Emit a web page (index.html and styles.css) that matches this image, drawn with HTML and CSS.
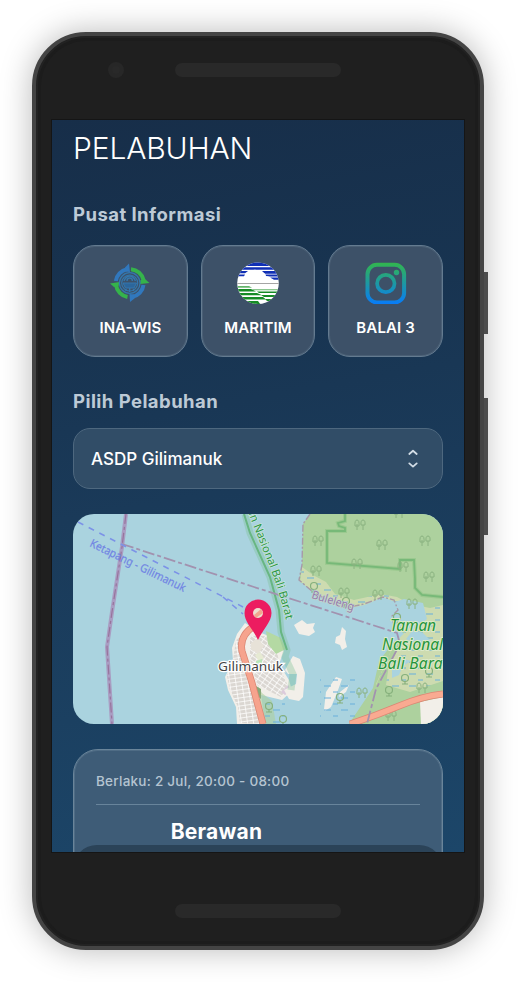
FILE: index.html
```html
<!DOCTYPE html>
<html lang="id">
<head>
<meta charset="utf-8">
<title>Pelabuhan</title>
<link rel="stylesheet" href="styles.css">
</head>
<body>
<div class="phone">
  <span class="side-key power"></span>
  <span class="side-key volume"></span>
  <div class="top-bezel"><span class="camera"></span><span class="speaker"></span></div>
  <main class="screen">
    <h1>PELABUHAN</h1>
    <h2 class="info-title">Pusat Informasi</h2>
    <div class="links">
      <a class="link-card">
        <svg width="42" height="42" viewBox="109 262 42 42" fill="none">
          <g stroke-width="4">
            <path d="M115.8 281A14 14 0 0 1 127 269.2" stroke="#3178bd"/>
            <path d="M131 269.2A14 14 0 0 1 143.5 280" stroke="#35b34b"/>
            <path d="M143.5 285A14 14 0 0 1 132 297" stroke="#3178bd"/>
            <path d="M127.500 297A14 14 0 0 1 116 285" stroke="#35b34b"/>
          </g>
          <path d="M125 267.500L129 263.500L130 272L126 271.500ZM134.500 298.500L130 302L129.500 294L134 294.500Z" fill="#3178bd"/>
          <path d="M145 279L149.500 283L140 284L140.500 280ZM114 287L110 283.500L119.500 282L118.500 286Z" fill="#35b34b"/>
          <g stroke="#3477ad">
            <circle cx="129.700" cy="283" r="10.300" stroke-width="1.2"/>
            <circle cx="129.700" cy="283" r="8" stroke-width="1.2"/>
            <path d="M123 283h13.500l-2.500 5h-8.500z" fill="#2c669b" stroke-width="1"/>
            <path d="M124 281q2-5 5.700-5t5.700 5M127 281q0-3 2.700-3t2.700 3M126 289v2M129.700 288v4M133.500 289v2" stroke-width="1.400"/>
          </g>
        </svg>
        <span class="tight">INA-WIS</span>
      </a>
      <a class="link-card">
        <svg width="42" height="42" viewBox="237 262 42 42">
          <clipPath id="globe"><circle cx="258" cy="283.200" r="20.800"/></clipPath>
          <g clip-path="url(#globe)">
            <path d="M237 262h42v43h-42z" fill="#fff"/>
            <path d="M237 262h42v4h-42zM237 267.200h42v2.600h-42zM237 271h11l-3 2.200h-8zM262 271h17v2.800h-14zM237 274.500h8l-1 1.800h-7zM260 274.600h19v2h-15zM270 277.500h9v2.200h-5z" fill="#102fb5"/>
            <path d="M246 277q0-4 4-4q2-4 6.500-3q4-.5 5.500 3q4 0 4 3q4 0 5 3h-25z" fill="#fff"/>
            <path d="M237 283h42v1h-42z" fill="#a5a5a5"/>
            <path d="M237 286h12l3 1.800h-15zM252 289.200h27v1h-26z" fill="#65b56c"/>
            <path d="M237 289h14l5 2.500h-19zM257 291.500h22v1.500h-20zM237 293h20l5 2.200h-25zM261 295h18v2h-15zM237 297h26l3 2.500h-29zM265 299h14v2h-12zM237 301h21l3 4h-24z" fill="#168b25"/>
          </g>
        </svg>
        <span>MARITIM</span>
      </a>
      <a class="link-card">
        <svg width="42" height="42" viewBox="364.500 262.500 42 42" fill="none">
          <defs><linearGradient id="ig" gradientUnits="userSpaceOnUse" x1="0" y1="263" x2="0" y2="304"><stop offset="0" stop-color="#32b64d"/><stop offset="1" stop-color="#087cf6"/></linearGradient></defs>
          <rect x="367" y="265.300" width="36.600" height="37.600" rx="9.500" stroke="url(#ig)" stroke-width="4"/>
          <circle cx="385.300" cy="284" r="8.700" stroke="url(#ig)" stroke-width="3.700"/>
          <circle cx="396" cy="273" r="2.700" fill="url(#ig)"/>
        </svg>
        <span>BALAI 3</span>
      </a>
    </div>
    <h2 class="port-title">Pilih Pelabuhan</h2>
    <div class="select">
      <span>ASDP Gilimanuk</span>
      <svg width="12" height="20" viewBox="0 0 12 20" fill="none" stroke="#d3dde6" stroke-width="1.800" stroke-linecap="round" stroke-linejoin="round"><path d="M2.300 5L6 1.800L9.700 5M2.300 14.400L6 17.600L9.700 14.400"/></svg>
    </div>
    <svg class="map" width="370" height="210" viewBox="73 514 370 210" fill="none">
      <defs>
        <pattern id="streets" width="6" height="4" patternUnits="userSpaceOnUse" patternTransform="rotate(-8)"><path d="M0 0h6v4H0z" fill="#dbd7d2"/><path d="M0 0h6M0 0v4" stroke="#fff" stroke-width="1.500"/></pattern>
        <pattern id="streets2" width="6" height="4" patternUnits="userSpaceOnUse" patternTransform="rotate(35)"><path d="M0 0h6v4H0z" fill="#dbd7d2"/><path d="M0 0h6M0 0v4" stroke="#fff" stroke-width="1.500"/></pattern>
        <pattern id="marsh" width="17" height="12" patternUnits="userSpaceOnUse"><path d="M1 2h7M10 8h5" stroke="#67b0dc" stroke-width="1.200"/></pattern>
        <g id="trees" stroke="#8ab280" stroke-width="1"><path d="M-3 5V-1M3 5V0M-5 1Q-5.500-5-3-5T-1 1ZM1 0Q.5-5 3-5T5 0Z"/></g>
        <g id="mangrove" stroke="#86b07c" stroke-width="1.200"><circle r="3.500"/><path d="M0 3v3M-3 6h6"/></g>
        <path id="park-label" d="M232 466L249 515Q261 545 270 568T286 620"/>
      </defs>
      <path d="M73 514h370v210H73z" fill="#aad3df"/>
      <path d="M310 514L303 524L302 565L299 580L313 592L333 603L350 607L364 604L383 597L394 600L398 610L391 617L395 627L410 638L393 643L379 661L373 688L349 724H443V514Z" fill="#add19e"/>
      <path d="M302 567L313 575L326 582L335 594L354 600L381 594L397 597L410 604L430 608L443 605V692L428 690L400 704L378 706L376 684L394 644L405 632L392 617L399 608L389 600L369 604L350 608L331 603L300 582Z" fill="#cddbb0"/>
      <path d="M302 567L313 575L326 582L335 594L354 600L381 594L397 597L410 604L430 608L443 605V692L428 690L400 704L378 706L376 684L394 644L405 632L392 617L399 608L389 600L369 604L350 608L331 603L300 582Z" fill="url(#marsh)"/>
      <path d="M365 605L383 597L395 602L404 599L423 603L427 619L413 630L403 625L394 630L389 620L397 608L389 603Z" fill="#aad3df"/>
      <path d="M392 668l5-6 7-3 7 2-8 5-4 9-7 3zM413 630l10 3 8 8-14 4-11-6z" fill="#aad3df"/>
      <path d="M349 724L374 690L394 644L402 641L389 664L386 685L410 692L443 681V724Z" fill="#add19e"/>
      <path d="M420 702L443 697V724H421Z" fill="#f2efe9"/>
      <path d="M345 514v7l-7 2 1 3 6 2v3H327V563L400 569V560H414L415 579V588L422 595L443 597" stroke="#7fbd79" stroke-width="4" opacity=".4"/>
      <path d="M345 514v7l-7 2 1 3 6 2v3H327V563L400 569V560H414L415 579V588L422 595L443 597" stroke="#77b978" stroke-width="1.800"/>
      <path d="M310 514L303 524L302 565L299 580L313 592L333 603L350 607L364 604L383 597L394 600L398 610L391 617L395 627" stroke="#a79aa8" stroke-width="1.400" stroke-dasharray="7 2 2 2"/>
      <use href="#trees" x="360" y="525"/><use href="#trees" x="318" y="541"/><use href="#trees" x="382" y="545"/><use href="#trees" x="425" y="541"/><use href="#trees" x="357" y="564"/><use href="#trees" x="403" y="567"/><use href="#trees" x="429" y="577"/><use href="#trees" x="316" y="571"/><use href="#trees" x="344" y="593"/><use href="#trees" x="399" y="513"/><use href="#trees" x="378" y="595"/><use href="#trees" x="412" y="604"/><use href="#trees" x="422" y="688"/><use href="#trees" x="391" y="716"/><use href="#trees" x="362" y="693"/>
      <use href="#mangrove" x="314" y="586"/><use href="#mangrove" x="346" y="601"/><use href="#mangrove" x="429" y="671"/><use href="#mangrove" x="405" y="678"/><use href="#mangrove" x="389" y="690"/><use href="#mangrove" x="397" y="617"/>
      <path d="M245 623L237 634L232 648L233 661L225 677L228 690L236 707L237 724H265L261 695L282 700L292 691L289 680L279 664L284 651L276 639L259 632Z" fill="#f2efe9"/>
      <path d="M236 640L233 660L227 676L230 690L238 707L240 723L259 724L252 682L242 652L243 635Z" fill="url(#streets)"/>
      <path d="M250 636L266 636L277 652L281 671L289 688L281 697L257 685L250 659Z" fill="url(#streets2)"/>
      <path d="M266 631L281 638L286 649L276 654L268 644Z" fill="#b4d9a3"/>
      <path d="M251 643l7-5 6 8-6 8-7-5z" fill="#e7e2d8"/><path d="M255 655l5-3 4 6-5 4z" fill="#e6ead3"/><path d="M256 661l6-2v6h-6z" fill="#b8e6b7"/><path d="M281 692l7-7 4 6-7 4z" fill="#dccbdc"/>
      <path d="M258 686l4 7 10 8 4 23H263z" fill="#add19e" opacity=".6"/>
      <path d="M256 686l5 3v10l-5-4z" fill="#89a879"/>
      <path d="M254 626Q239 636 242 651L252 683L263 724" stroke="#db8774" stroke-width="7"/>
      <path d="M254 626Q239 636 242 651L252 683L263 724" stroke="#f6a38d" stroke-width="5.500"/>
      <path d="M350 724Q375 716 399 706T443 694" stroke="#dc8774" stroke-width="7"/>
      <path d="M350 724Q375 716 399 706T443 694" stroke="#f9aa91" stroke-width="5.500"/>
      <g fill="#f2efe9">
        <path d="M294 625l8-5 5 4 8-1-2 5 2 4-6 4-10-2zM336 637l4-2 2-8 4 4-1 8 2 8-5 3-2-5-5-2zM290 661l3-5 7 3 5 14-2 24-4 4-10-2-5-9 12-6 1-10-9 0-3-4zM324 709l2-17 10-15 6 2-5 14-6 14-6 4zM340 692l9-7-3 7-7 5z"/>
      </g>
      <path d="M263 702h22v22h-22zM320 677h38v42h-38z" fill="url(#marsh)"/>
      <use href="#mangrove" x="269" y="706"/><use href="#mangrove" x="340" y="697"/><use href="#mangrove" x="283" y="719"/>
      <path d="M245 514L250 533L270 577L279 610L281 632L287 650L285 657L293 674L291 690" stroke="#7ac193" stroke-width="7" opacity=".35"/>
      <path d="M244 514L250 533L270 577L279 610L281 632L287 650" stroke="#67b682" stroke-width="2"/>
      <path d="M126 514L122 547L112 612L107 647L112 724" stroke="#a88bb8" stroke-width="4" opacity=".75"/>
      <path d="M126 514L122 547L112 612L107 647L112 724" stroke="#98739c" stroke-width="1.200" stroke-dasharray="10 3 3 3"/>
      <path d="M122 544L254 587L357 620L397 633L400 644L376 689L367 724" stroke="#a292af" stroke-width="1.800" stroke-dasharray="12 3 4 3"/>
      <path d="M78 522L243 607M223 597L243 614" stroke="#7c92e7" stroke-width="1.500" stroke-dasharray="6 6"/>
      <g font-family="Noto Sans">
        <text transform="translate(89 546) rotate(26)" fill="#7185e3" stroke="#7185e3" stroke-width=".2" font-size="11.500" textLength="105" lengthAdjust="spacingAndGlyphs">Ketapang - Gilimanuk</text>
        <text transform="translate(311 598) rotate(17)" fill="#967bad" stroke="#c3d6cf" stroke-width="1.500" paint-order="stroke" font-size="11.500" textLength="44" lengthAdjust="spacingAndGlyphs">Buleleng</text>
        <text fill="#2d9748" stroke="#d0e8dc" stroke-width="1.200" paint-order="stroke" font-size="11.300"><textPath href="#park-label" startOffset="100%" text-anchor="end">Taman Nasional Bali Barat</textPath></text>
        <g fill="#25943a" stroke="#dceac9" stroke-width="2" paint-order="stroke" font-size="15.500" font-style="italic">
          <text x="390" y="631" textLength="46">Taman</text><text x="382" y="650" textLength="61">Nasional</text><text x="378" y="669" textLength="70">Bali Barat</text>
        </g>
        <text x="218" y="671" fill="#444" stroke="#fff" stroke-width="2.500" paint-order="stroke" font-size="13.300" textLength="65" lengthAdjust="spacingAndGlyphs">Gilimanuk</text>
      </g>
      <path d="M258 640C253 629 244.500 622 244.500 613a13.500 13.500 0 0 1 27 0C271.500 622 263 629 258 640Z" fill="#ec1c60"/>
      <circle cx="258" cy="613" r="5" fill="#eedfcf"/><path d="M254 615l7-6 2 4-7 5z" fill="#f2a58e"/>
    </svg>
    <section class="weather">
      <p>Berlaku: 2 Jul, 20:00 - 08:00</p>
      <h3>Berawan</h3>
    </section>
    <div class="dock"></div>
  </main>
  <div class="bottom-bezel"><span class="speaker"></span></div>
</div>
</body>
</html>
```
FILE: styles.css
```css
* { box-sizing: border-box; }
body { margin: 0; height: 982px; padding: 32px; overflow: hidden; background: #fff; font-family: Inter, "Liberation Sans", sans-serif; }
.phone { position: relative; width: 452px; height: 918px; border: 4px solid #444; border-radius: 54px; padding: 0 15px; background: #1f1f1f; box-shadow: inset 0 0 0 2px #222, inset 0 0 0 5px #1c1c1c, 0 0 32px rgba(0,0,0,.28); }
.side-key { position: absolute; right: -8px; width: 4px; background: #4c4c4c; }
.power { top: 236px; height: 62px; }
.volume { top: 362px; height: 137px; }
.top-bezel { height: 83px; display: flex; align-items: flex-start; padding: 26px 0 0 57px; gap: 51px; }
.camera { width: 16px; height: 16px; border-radius: 50%; background: #292929; border: 4px solid #272727; }
.speaker { display: block; width: 166px; height: 14px; margin-top: 1px; border-radius: 7px; background: #292929; }
.screen { position: relative; width: 414px; height: 734px; border: 1px solid #151515; padding: 9px 21px 0; overflow: hidden; background: linear-gradient(170deg, #172e49 0%, #183451 28%, #1a3a59 50%, #1c4669 100%); color: #fff; }
.bottom-bezel { display: flex; justify-content: center; padding-top: 50px; }
h1, h2, h3, p { margin: 0; }
h1 { height: 38px; line-height: 38px; font-size: 30px; font-weight: 300; letter-spacing: -.15px; }
h2 { height: 24px; line-height: 24px; font-size: 18.500px; font-weight: 700; letter-spacing: .45px; color: #bdcad6; }
.info-title { margin-top: 35px; }
.links { margin-top: 19px; display: grid; grid-template-columns: repeat(3, 1fr); gap: 13px; }
.link-card { height: 112px; padding-top: 16px; display: flex; flex-direction: column; align-items: center; gap: 14px; border: 1px solid #647b90; border-radius: 22px; background: #3d5168; box-shadow: inset 0 0 0 1px rgba(100,123,144,.35); }
.link-card span { line-height: 20px; font-size: 15px; font-weight: 600; letter-spacing: .15px; }
.link-card .tight { letter-spacing: 0; }
.port-title { margin-top: 32px; }
.select { height: 61px; margin-top: 15px; padding: 1px 23px 0 17px; display: flex; align-items: center; justify-content: space-between; border: 1px solid #4e687f; border-radius: 17px; background: #314d67; font-size: 17px; font-weight: 500; letter-spacing: .02px; }
.map { display: block; margin-top: 25px; border-radius: 21px; }
.weather { height: 160px; margin-top: 25px; padding: 0 22px; border: 1px solid #6a859a; border-radius: 25px; background: #3e5c77; box-shadow: inset 0 0 0 1px rgba(106,133,154,.4); }
.weather p { height: 55px; padding-top: 20px; line-height: 22px; border-bottom: 1px solid #68849b; font-size: 13.500px; font-weight: 500; letter-spacing: .25px; color: #b5c4d1; }
.weather h3 { width: 241px; margin-top: 12px; line-height: 29px; text-align: center; font-size: 21px; font-weight: 700; letter-spacing: .25px; }
.dock { position: absolute; left: 21px; right: 21px; bottom: -54px; height: 61px; border-radius: 24px; background: #2b4358; }
```
